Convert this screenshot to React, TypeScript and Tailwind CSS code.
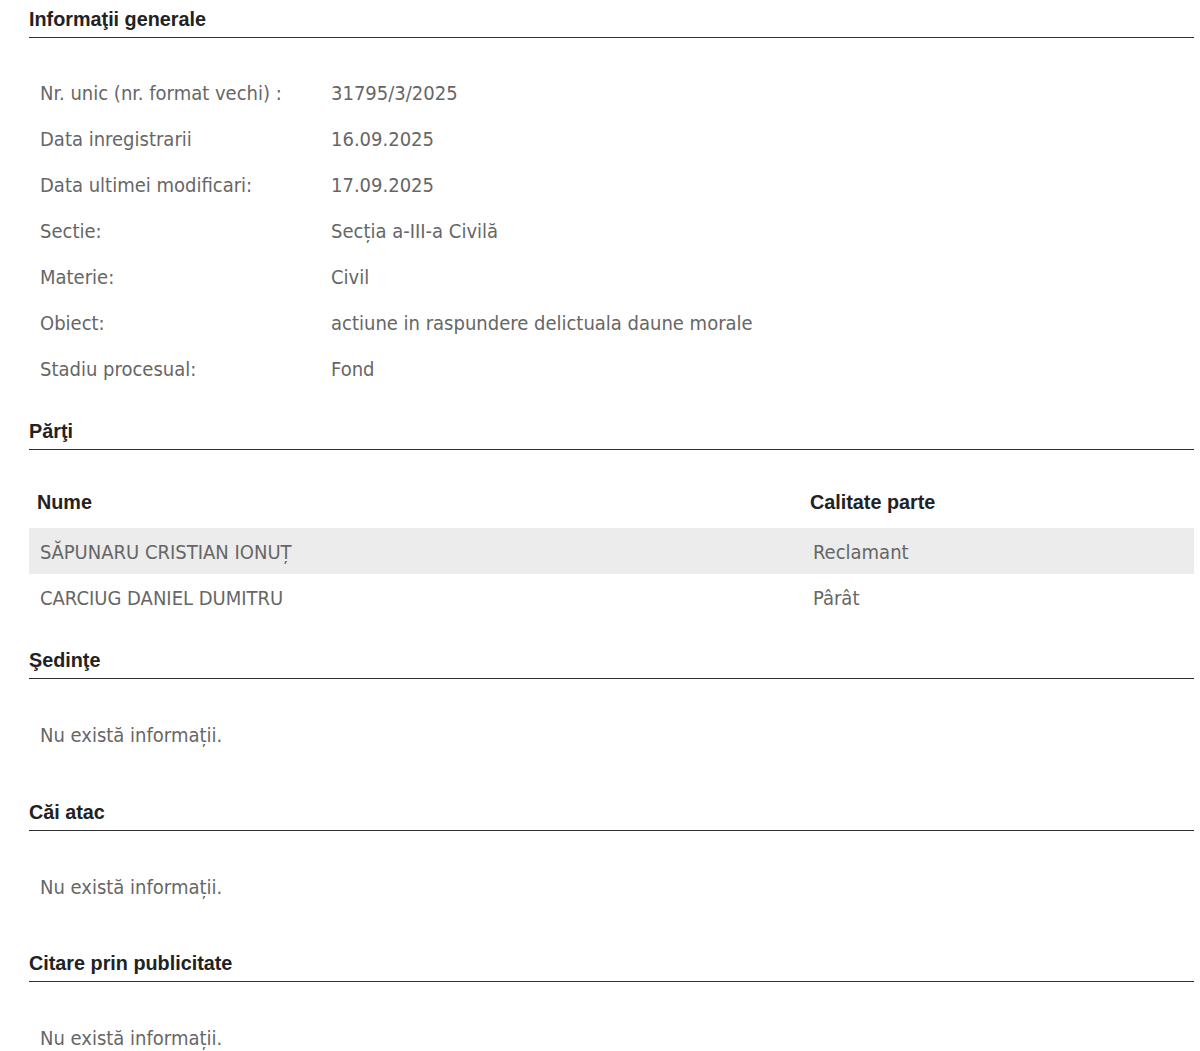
const info = [
  ['Nr. unic (nr. format vechi) :', '31795/3/2025'],
  ['Data inregistrarii', '16.09.2025'],
  ['Data ultimei modificari:', '17.09.2025'],
  ['Sectie:', 'Secția a-III-a Civilă'],
  ['Materie:', 'Civil'],
  ['Obiect:', 'actiune in raspundere delictuala daune morale'],
  ['Stadiu procesual:', 'Fond'],
];

const parti = [
  { nume: 'SĂPUNARU CRISTIAN IONUȚ', calitate: 'Reclamant' },
  { nume: 'CARCIUG DANIEL DUMITRU', calitate: 'Pârât' },
];

const bodyFont = "font-['DejaVu_Sans_Condensed','Tahoma','DejaVu_Sans',sans-serif]";
const headFont = "font-['Liberation_Sans',Arial,sans-serif]";

const Heading = ({ children }: { children: string }) => (
  <h2
    className={`${headFont} text-[19.8px] font-bold leading-[24px] text-[#222] pb-[6px] border-b border-[#333]`}
  >
    {children}
  </h2>
);

const Empty = ({ last = false }: { last?: boolean }) => (
  <div className={`${bodyFont} pt-[33px] ${last ? 'pb-0' : 'pb-[41.5px]'}`}>
    <div className="h-[46px] flex items-center pl-[11px] text-[20px] text-[#666]">
      Nu există informații.
    </div>
  </div>
);

export default function App() {
  return (
    <div className="bg-white min-h-screen pt-[7px] pl-[29px]">
      <div className="w-[1165px]">
        <Heading>Informaţii generale</Heading>
        <div className={`${bodyFont} pt-[32px] pb-[27px] text-[20px] text-[#666]`}>
          {info.map(([label, value]) => (
            <div key={label} className="grid grid-cols-[291px_1fr] h-[46px] items-center pl-[11px]">
              <span>{label}</span>
              <span>{value}</span>
            </div>
          ))}
        </div>

        <Heading>Părţi</Heading>
        <div className="pt-[29px] pb-[28px]">
          <div className={`${headFont} grid grid-cols-[773px_1fr] h-[49px] items-center text-[19.8px] font-bold text-[#222] pb-[2px]`}>
            <span className="pl-[8px]">Nume</span>
            <span className="pl-[8px]">Calitate parte</span>
          </div>
          {parti.map((p, i) => (
            <div
              key={p.nume}
              className={`${bodyFont} grid grid-cols-[773px_1fr] h-[46px] items-center text-[20px] text-[#666] pt-[2px] ${
                i === 0 ? 'bg-[#ececec]' : ''
              }`}
            >
              <span className="pl-[11px]">{p.nume}</span>
              <span className="pl-[11px]">{p.calitate}</span>
            </div>
          ))}
        </div>

        <Heading>Şedinţe</Heading>
        <Empty />

        <Heading>Căi atac</Heading>
        <Empty />

        <Heading>Citare prin publicitate</Heading>
        <Empty last />
      </div>
    </div>
  );
}
